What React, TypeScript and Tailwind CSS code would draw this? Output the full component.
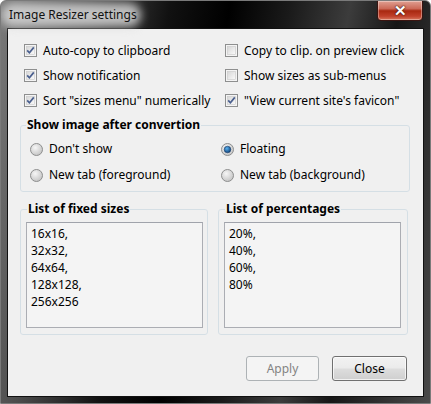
import React from "react";

type CheckItem = { label: string; checked: boolean };

const leftChecks: CheckItem[] = [
  { label: "Auto-copy to clipboard", checked: true },
  { label: "Show notification", checked: true },
  { label: 'Sort "sizes menu" numerically', checked: true },
];

const rightChecks: CheckItem[] = [
  { label: "Copy to clip. on preview click", checked: false },
  { label: "Show sizes as sub-menus", checked: false },
  { label: "\"View current site's favicon\"", checked: true },
];

const fixedSizes = ["16x16,", "32x32,", "64x64,", "128x128,", "256x256"];
const percentages = ["20%,", "40%,", "60%,", "80%"];

function CheckBox({ checked }: { checked: boolean }) {
  return (
    <svg width="13" height="13" viewBox="0 0 13 13" className="shrink-0">
      <defs>
        <linearGradient id="cbfill" x1="0" y1="0" x2="1" y2="1">
          <stop offset="0" stopColor="#d6d6d6" />
          <stop offset="1" stopColor="#fbfbfb" />
        </linearGradient>
      </defs>
      <rect x="0.5" y="0.5" width="12" height="12" fill="#f4f4f4" stroke="#8e8f8f" />
      <rect x="2.5" y="2.5" width="8" height="8" fill="url(#cbfill)" stroke="#c9c9c9" strokeWidth="0.6" />
      {checked && (
        <path d="M3.2 6.4 L5.4 8.8 L9.8 3.4" fill="none" stroke="#4a5f8e" strokeWidth="1.7" />
      )}
    </svg>
  );
}

function Radio({ checked }: { checked: boolean }) {
  return (
    <svg width="13" height="13" viewBox="0 0 13 13" className="shrink-0">
      <defs>
        <radialGradient id="rdfill" cx="0.4" cy="0.35" r="0.7">
          <stop offset="0" stopColor="#f6f6f6" />
          <stop offset="1" stopColor="#c2c2c2" />
        </radialGradient>
        <radialGradient id="rddot" cx="0.4" cy="0.35" r="0.7">
          <stop offset="0" stopColor="#5ab2f0" />
          <stop offset="1" stopColor="#0c3d73" />
        </radialGradient>
      </defs>
      <circle cx="6.5" cy="6.5" r="6" fill="url(#rdfill)" stroke="#8e8f8f" />
      {checked && <circle cx="6.5" cy="6.5" r="3.3" fill="url(#rddot)" stroke="#1b3c6a" strokeWidth="0.6" />}
    </svg>
  );
}

function CheckRow({ item }: { item: CheckItem }) {
  return (
    <div className="flex h-[25px] items-center gap-[6px]">
      <CheckBox checked={item.checked} />
      <span>{item.label}</span>
    </div>
  );
}

function ListGroup({ title, lines, width }: { title: string; lines: string[]; width: string }) {
  return (
    <fieldset className={`${width} h-[134px] rounded-[3px] border border-[#d5dfe5]`}>
      <legend className="ml-[6px] px-[1px] font-bold leading-[16px]">{title}</legend>
      <div className="ml-[5px] mt-[5px] h-[106px] w-[177px] border border-[#abadb3] border-t-[#a0a3ab] bg-[#f4f4f4] pl-[4px] pt-[2px] leading-[17px]">
        {lines.map((line) => (
          <div key={line}>{line}</div>
        ))}
      </div>
    </fieldset>
  );
}

export default function App() {
  return (
    <div
      className="relative h-[404px] w-[431px] overflow-hidden rounded-t-[6px] border border-[#7a7a7a] px-[6px] pb-[6px] pt-[27px] text-[12px] text-black"
      style={{
        fontFamily: '"Noto Sans", "Open Sans", sans-serif',
        background:
          "linear-gradient(100deg, #7a7a7a 0%, #4a4a4a 18%, #111 34%, #000 46%, #1a1a1a 58%, #3c3c3c 70%, #161616 80%, #4a4a4a 100%)",
      }}
    >
      {/* title glow */}
      <div className="absolute left-[0px] top-[2px] h-[24px] w-[140px] rounded-[12px] bg-[rgba(215,215,215,0.85)] blur-[5px]" />
      <div className="absolute left-[8px] top-[6px] leading-[16px] text-[#111]">Image Resizer settings</div>

      {/* close button */}
      <div className="absolute right-[7px] top-[-1px] flex h-[21px] w-[46px] items-center justify-center rounded-b-[4px] border border-[#3a1410] bg-[linear-gradient(180deg,#e0a092_0%,#cc6a58_40%,#a82810_52%,#c0402a_80%,#d8785e_100%)] shadow-[inset_0_0_0_1px_rgba(255,255,255,0.35)]">
        <span className="text-[15px] font-bold leading-none text-white [text-shadow:0_0_2px_#3a1006,0_0_1px_#3a1006]">✕</span>
      </div>

      {/* client area */}
      <div className="flex h-full flex-col border border-[#111] bg-[#f0f0f0]">
        <div className="grid grid-cols-[201px_1fr] pl-[16px] pt-[9px]">
          <div className="flex flex-col">
            {leftChecks.map((c) => (
              <CheckRow key={c.label} item={c} />
            ))}
          </div>
          <div className="flex flex-col">
            {rightChecks.map((c) => (
              <CheckRow key={c.label} item={c} />
            ))}
          </div>
        </div>

        <fieldset className="ml-[12px] mt-[4px] w-[390px] rounded-[3px] border border-[#d5dfe5] pb-[3px]">
          <legend className="ml-[5px] px-[1px] font-bold leading-[16px]">Show image after convertion</legend>
          <div className="grid grid-cols-[191px_1fr] pl-[9px] pt-[3px]">
            <div className="flex h-[26px] items-center gap-[6px]">
              <Radio checked={false} />
              <span>Don't show</span>
            </div>
            <div className="flex h-[26px] items-center gap-[6px]">
              <Radio checked={true} />
              <span>Floating</span>
            </div>
            <div className="flex h-[26px] items-center gap-[6px]">
              <Radio checked={false} />
              <span>New tab (foreground)</span>
            </div>
            <div className="flex h-[26px] items-center gap-[6px]">
              <Radio checked={false} />
              <span>New tab (background)</span>
            </div>
          </div>
        </fieldset>

        <div className="ml-[12px] mt-[9px] flex gap-[10px]">
          <ListGroup title="List of fixed sizes" lines={fixedSizes} width="w-[188px]" />
          <ListGroup title="List of percentages" lines={percentages} width="w-[190px]" />
        </div>

        <div className="mr-[16px] mt-[21px] flex justify-end gap-[13px]">
          <button
            type="button"
            disabled
            className="h-[25px] w-[73px] rounded-[3px] border border-[#adb2b5] bg-[#f4f4f4] text-[#838383]"
          >
            Apply
          </button>
          <button
            type="button"
            className="h-[25px] w-[75px] rounded-[3px] border border-[#707070] bg-[linear-gradient(180deg,#f2f2f2_0%,#ebebeb_48%,#dddddd_52%,#cfcfcf_100%)] text-black shadow-[inset_0_0_0_1px_rgba(255,255,255,0.7)]"
          >
            Close
          </button>
        </div>
      </div>
    </div>
  );
}
